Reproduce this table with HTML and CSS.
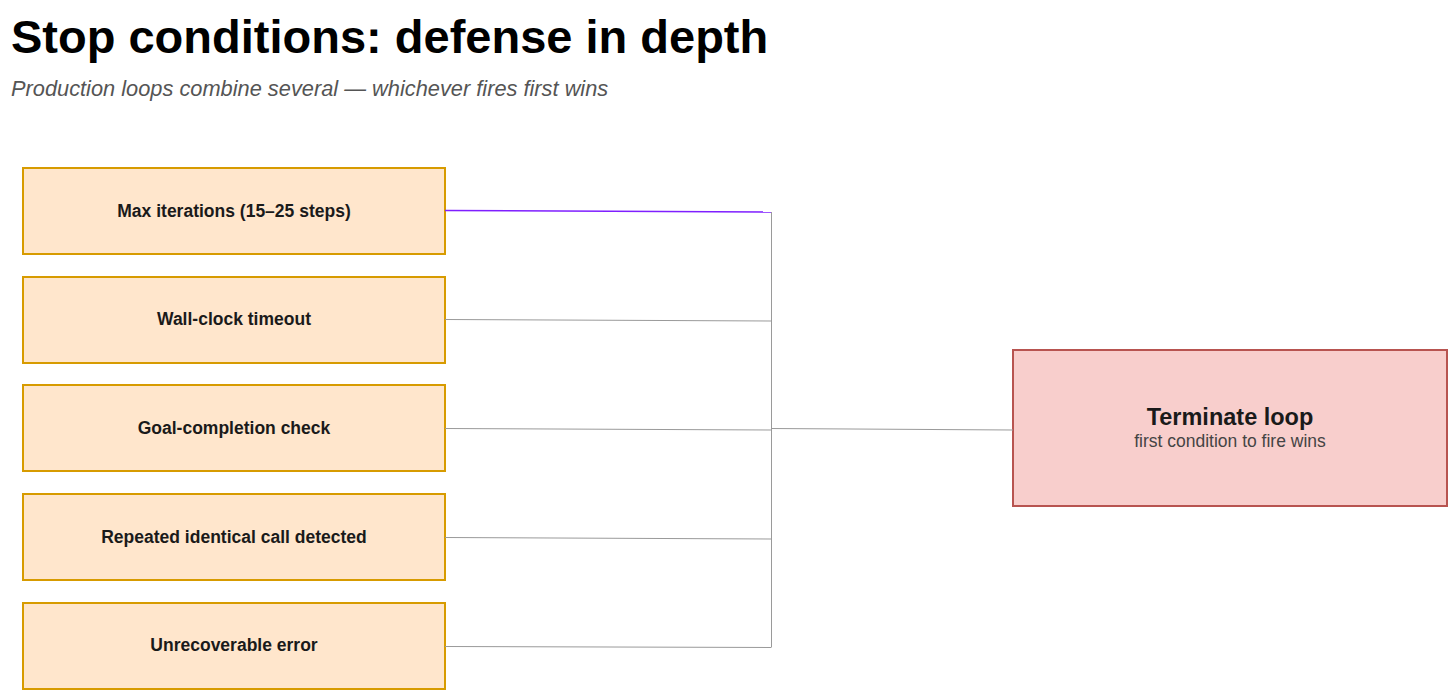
FILE: index.html
```html
<!DOCTYPE html>
<html lang="en">
<head>
<meta charset="utf-8">
<title>Stop conditions: defense in depth</title>
<link rel="stylesheet" href="styles.css">
</head>
<body>
<header class="header">
  <h1 class="title">Stop conditions: defense in depth</h1>
  <p class="subtitle">Production loops combine several — whichever fires first wins</p>
</header>
<main class="diagram">
  <svg class="wires" width="1456" height="530" viewBox="0 0 1456 530" aria-hidden="true">
    <g fill="none" stroke="#9a9a9a" stroke-width="1">
      <line x1="445" y1="152.5" x2="771" y2="154" />
      <line x1="445" y1="261.5" x2="771" y2="263" />
      <line x1="445" y1="370.5" x2="771" y2="372" />
      <line x1="445" y1="479.5" x2="771" y2="480.5" />
      <line x1="771.5" y1="45" x2="771.5" y2="480.5" />
      <line x1="771" y1="261.5" x2="1013" y2="263" />
    </g>
    <line x1="445" y1="43.5" x2="771" y2="45" stroke="#7f1fff" stroke-width="1.6" />
  </svg>
  <div class="conditions">
    <div class="cond">Max iterations (15–25 steps)</div>
    <div class="cond">Wall-clock timeout</div>
    <div class="cond">Goal-completion check</div>
    <div class="cond">Repeated identical call detected</div>
    <div class="cond">Unrecoverable error</div>
  </div>
  <div class="terminate">
    <div class="term-title">Terminate loop</div>
    <div class="term-sub">first condition to fire wins</div>
  </div>
</main>
</body>
</html>
```

FILE: styles.css
```css
html, body {
  margin: 0;
  padding: 0;
  background: #ffffff;
}

body {
  font-family: "Liberation Sans", Arial, sans-serif;
  color: #000;
  width: 1456px;
  height: 697px;
  overflow: hidden;
}

.header {
  padding: 9px 0 0 11px;
  height: 158px;
  box-sizing: border-box;
}

.title {
  margin: 0;
  font-size: 47px;
  line-height: 56px;
  font-weight: 700;
}

.subtitle {
  margin: 0;
  padding-top: 11px;
  font-size: 21.8px;
  line-height: 26px;
  font-style: italic;
  color: #555555;
}

.diagram {
  position: relative;
  display: flex;
  align-items: center;
  justify-content: space-between;
  padding: 0 8px 0 22px;
  margin-top: 9px;
}

.wires {
  position: absolute;
  left: 0;
  top: 0;
  pointer-events: none;
}

.conditions {
  display: flex;
  flex-direction: column;
  gap: 20.7px;
}

.cond {
  width: 424px;
  height: 88px;
  box-sizing: border-box;
  background: #ffe6cc;
  border: 2px solid #d79b00;
  display: flex;
  align-items: center;
  justify-content: center;
  font-weight: 700;
  font-size: 17.5px;
  color: #1a1a1a;
}

.terminate {
  width: 436px;
  height: 158px;
  box-sizing: border-box;
  background: #f8cecc;
  border: 2px solid #b85450;
  display: flex;
  flex-direction: column;
  align-items: center;
  justify-content: center;
}

.term-title {
  font-weight: 700;
  font-size: 23.5px;
  line-height: 26px;
  color: #1a1a1a;
}

.term-sub {
  font-size: 17.5px;
  line-height: 22px;
  color: #444444;
}
```
